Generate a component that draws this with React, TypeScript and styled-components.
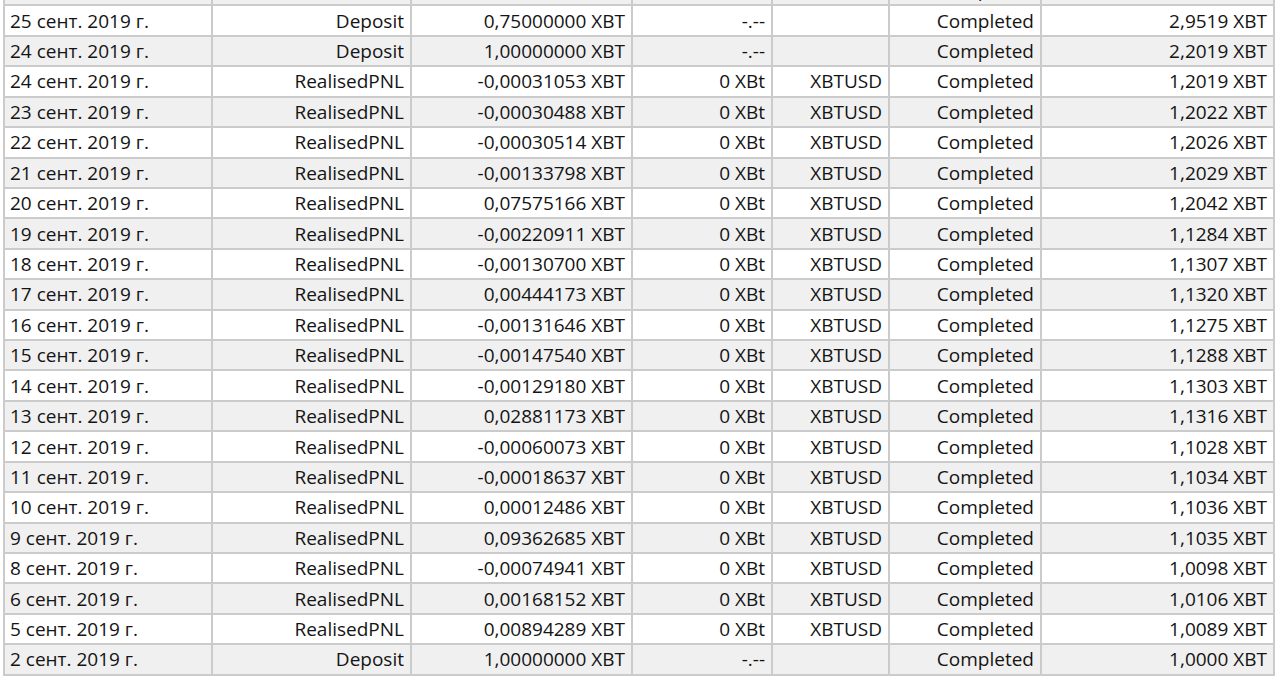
import styled, { createGlobalStyle } from "styled-components";

const GlobalStyle = createGlobalStyle`
  html, body {
    margin: 0;
    padding: 0;
    background: #ffffff;
  }
  body {
    font-family: "Open Sans", "Noto Sans", sans-serif;
    color: #141414;
  }
`;

const BORDER = "#cbcbcb";
const STRIPE = "#f0f0f0";

type Row = {
  date: string;
  type: string;
  amount: string;
  fee: string;
  address: string;
  status: string;
  balance: string;
};

const pnl = (date: string, amount: string, balance: string): Row => ({
  date,
  type: "RealisedPNL",
  amount,
  fee: "0 XBt",
  address: "XBTUSD",
  status: "Completed",
  balance,
});

const deposit = (date: string, amount: string, balance: string): Row => ({
  date,
  type: "Deposit",
  amount,
  fee: "-.--",
  address: "",
  status: "Completed",
  balance,
});

// first row is scrolled mostly out of view, as in the screenshot
const rows: Row[] = [
  pnl("26 сент. 2019 г.", "-0,00041310 XBT", "2,9515 XBT"),
  deposit("25 сент. 2019 г.", "0,75000000 XBT", "2,9519 XBT"),
  deposit("24 сент. 2019 г.", "1,00000000 XBT", "2,2019 XBT"),
  pnl("24 сент. 2019 г.", "-0,00031053 XBT", "1,2019 XBT"),
  pnl("23 сент. 2019 г.", "-0,00030488 XBT", "1,2022 XBT"),
  pnl("22 сент. 2019 г.", "-0,00030514 XBT", "1,2026 XBT"),
  pnl("21 сент. 2019 г.", "-0,00133798 XBT", "1,2029 XBT"),
  pnl("20 сент. 2019 г.", "0,07575166 XBT", "1,2042 XBT"),
  pnl("19 сент. 2019 г.", "-0,00220911 XBT", "1,1284 XBT"),
  pnl("18 сент. 2019 г.", "-0,00130700 XBT", "1,1307 XBT"),
  pnl("17 сент. 2019 г.", "0,00444173 XBT", "1,1320 XBT"),
  pnl("16 сент. 2019 г.", "-0,00131646 XBT", "1,1275 XBT"),
  pnl("15 сент. 2019 г.", "-0,00147540 XBT", "1,1288 XBT"),
  pnl("14 сент. 2019 г.", "-0,00129180 XBT", "1,1303 XBT"),
  pnl("13 сент. 2019 г.", "0,02881173 XBT", "1,1316 XBT"),
  pnl("12 сент. 2019 г.", "-0,00060073 XBT", "1,1028 XBT"),
  pnl("11 сент. 2019 г.", "-0,00018637 XBT", "1,1034 XBT"),
  pnl("10 сент. 2019 г.", "0,00012486 XBT", "1,1036 XBT"),
  pnl("9 сент. 2019 г.", "0,09362685 XBT", "1,1035 XBT"),
  pnl("8 сент. 2019 г.", "-0,00074941 XBT", "1,0098 XBT"),
  pnl("6 сент. 2019 г.", "0,00168152 XBT", "1,0106 XBT"),
  pnl("5 сент. 2019 г.", "0,00894289 XBT", "1,0089 XBT"),
  deposit("2 сент. 2019 г.", "1,00000000 XBT", "1,0000 XBT"),
];

const columns: { key: keyof Row; width: number; align: "left" | "right" }[] = [
  { key: "date", width: 208, align: "left" },
  { key: "type", width: 199, align: "right" },
  { key: "amount", width: 221, align: "right" },
  { key: "fee", width: 140, align: "right" },
  { key: "address", width: 117, align: "right" },
  { key: "status", width: 152, align: "right" },
  { key: "balance", width: 233, align: "right" },
];

const Viewport = styled.div`
  height: 678px;
  overflow: hidden;
  padding-left: 3px;
`;

const Table = styled.table`
  width: 1272px;
  table-layout: fixed;
  border-collapse: collapse;
  margin-top: -26px;
  font-size: 19px;
  line-height: 1;
`;

const BodyRow = styled.tr<{ $striped: boolean }>`
  height: 30.43px;
  background: ${(p) => (p.$striped ? STRIPE : "#ffffff")};
`;

const Cell = styled.td<{ $align: "left" | "right" }>`
  border: 2px solid ${BORDER};
  padding: 1px 6px 0 5px;
  text-align: ${(p) => p.$align};
  white-space: nowrap;
  overflow: hidden;
`;

export default function App() {
  return (
    <>
      <GlobalStyle />
      <Viewport>
        <Table>
          <colgroup>
            {columns.map((c) => (
              <col key={c.key} style={{ width: c.width }} />
            ))}
          </colgroup>
          <tbody>
            {rows.map((row, i) => (
              <BodyRow key={i} $striped={i % 2 === 0}>
                {columns.map((c) => (
                  <Cell key={c.key} $align={c.align}>
                    {row[c.key]}
                  </Cell>
                ))}
              </BodyRow>
            ))}
          </tbody>
        </Table>
      </Viewport>
    </>
  );
}
